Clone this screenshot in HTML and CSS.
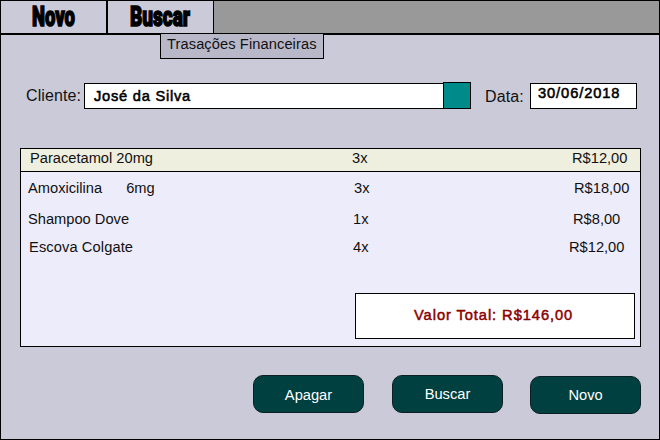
FILE: index.html
```html
<!DOCTYPE html>
<html lang="pt-BR">
<head>
<meta charset="utf-8">
<title>Vendas</title>
<link rel="stylesheet" href="styles.css">
</head>
<body>
<div class="app">
  <nav class="tabs">
    <a class="tab tab-first"><svg width="105" height="32"><text class="tab-text" x="31" y="25.3" textLength="43" lengthAdjust="spacingAndGlyphs">Novo</text></svg></a>
    <a class="tab tab-second"><svg width="105" height="32"><text class="tab-text" x="22" y="25.3" textLength="60" lengthAdjust="spacingAndGlyphs">Buscar</text></svg>
      <div class="submenu">Trasações Financeiras</div>
    </a>
  </nav>
  <div class="form">
    <label class="label">Cliente:</label>
    <div class="input client">José da Silva</div>
    <div class="picker"></div>
    <label class="label label-date">Data:</label>
    <div class="input date">30/06/2018</div>
  </div>
  <div class="list">
    <div class="row row-head"><span>Paracetamol 20mg</span><span>3x</span><span>R$12,00</span></div>
    <div class="row row-two"><span>Amoxicilina<span class="dose">6mg</span></span><span>3x</span><span>R$18,00</span></div>
    <div class="row row-three"><span>Shampoo Dove</span><span>1x</span><span>R$8,00</span></div>
    <div class="row row-four"><span class="spaced">Escova Colgate</span><span>4x</span><span>R$12,00</span></div>
    <div class="total">Valor Total: R$146,00</div>
  </div>
  <div class="actions">
    <div class="button button-delete">Apagar</div>
    <div class="button">Buscar</div>
    <div class="button button-new">Novo</div>
  </div>
</div>
</body>
</html>
```
FILE: styles.css
```css
* { box-sizing: border-box; }

body {
  margin: 0;
  font: 14.67px/16px "Liberation Sans", Arial, sans-serif;
  color: #111;
}

.app {
  width: 660px;
  height: 440px;
  border: 1px solid #000;
  background: #cbcad8;
}

.tabs {
  display: flex;
  height: 34px;
  background: #999;
  border-bottom: 2px solid #000;
}

.tab {
  position: relative;
  height: 32px;
  background: #cbcad8;
}

.tab svg { display: block; overflow: visible; }

.tab-first { width: 107px; border-right: 2px solid #000; }
.tab-second { width: 106px; border-right: 1px solid #000; }

.tab-text {
  font: 900 27.8px Roboto, sans-serif;
  fill: #000;
  stroke: #000;
  stroke-width: 1.5px;
}

.submenu {
  position: absolute;
  left: 52px;
  top: 33px;
  width: 164px;
  height: 25px;
  padding: 2px 0 0 6px;
  border: 1px solid #000;
  border-top: 0;
  background: #b9b8c9;
  white-space: nowrap;
  letter-spacing: 0.09px;
}

.form {
  display: flex;
  align-items: flex-start;
  height: 65px;
  margin-top: 47px;
  padding-left: 25px;
}

.label {
  width: 58px;
  padding-top: 5px;
  font-size: 16px;
  line-height: 17px;
  letter-spacing: 0.1px;
}

.label-date {
  width: 59px;
  padding: 6px 0 0 14px;
}

.input {
  height: 26px;
  margin-top: 1px;
  border: 1px solid #000;
  background: #fff;
  color: #000;
  -webkit-text-stroke: 0.55px currentColor;
}

.client {
  width: 360px;
  padding: 4px 0 0 9px;
  letter-spacing: 0.75px;
}

.date {
  width: 107px;
  padding: 1px 0 0 7px;
  letter-spacing: 0.9px;
}

.picker {
  width: 28px;
  height: 27px;
  margin-left: -1px;
  border: 1px solid #000;
  background: #008b8b;
}

.list {
  width: 621px;
  height: 199px;
  margin: 1px 0 0 19px;
  border: 1px solid #000;
  background: #edecfa;
}

.row {
  display: grid;
  grid-template-columns: 324px 217px 1fr;
}

.row-head {
  grid-template-columns: 322px 220px 1fr;
  height: 23px;
  padding: 1px 0 0 9px;
  background: #efefdf;
  border-bottom: 1px solid #000;
}

.row-two {
  grid-template-columns: 326px 220px 1fr;
  height: 31px;
  padding: 8px 0 0 7px;
}

.dose { margin-left: 24px; }
.spaced { letter-spacing: 0.1px; }

.row-three {
  grid-template-columns: 325px 220px 1fr;
  height: 28px;
  padding: 8px 0 0 7px;
}

.row-four {
  grid-template-columns: 324px 216px 1fr;
  height: 30px;
  padding: 8px 0 0 8px;
}

.total {
  width: 280px;
  height: 46px;
  margin: 32px 0 0 334px;
  padding: 13px 0 0 58px;
  border: 1px solid #000;
  background: #fff;
  color: #8b0000;
  letter-spacing: 0.93px;
  -webkit-text-stroke: 0.5px currentColor;
}

.actions {
  display: flex;
  gap: 28px;
  padding: 28px 0 0 252px;
}

.button {
  width: 111px;
  height: 38px;
  padding-top: 10px;
  border: 1px solid #0c2022;
  border-radius: 10px;
  background: #004040;
  color: #fff;
  text-align: center;
}

.button-delete { padding-top: 11px; }
.button-new { margin: 1px 0 0 -1px; }
```
